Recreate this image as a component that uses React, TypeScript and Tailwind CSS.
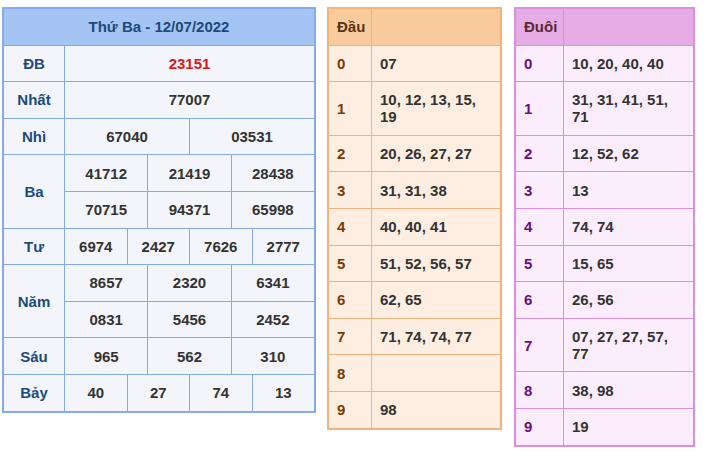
import React from "react";

const cellBase =
  "flex items-center py-[9.3px] leading-[17px] border-r border-b";

function LeftTable() {
  const c = `${cellBase} justify-center border-[#84ace8]`;
  const lab = `${c} text-[#1b4a7d]`;
  const num = `${c} text-[#333333]`;
  return (
    <div className="w-[314px] border-2 border-[#84ace8] overflow-hidden bg-[#f3f5fa]">
      <div className="grid grid-cols-[61px_repeat(12,minmax(0,1fr))] w-[calc(100%+1px)] mb-[-1px]">
        <div className={`${c} col-span-13 bg-[#a4c4f4] text-[#1f4a78]`}>Thứ Ba - 12/07/2022</div>

        <div className={lab}>ĐB</div>
        <div className={`${c} col-span-12 text-[#e0161c]`}>23151</div>

        <div className={lab}>Nhất</div>
        <div className={`${num} col-span-12`}>77007</div>

        <div className={lab}>Nhì</div>
        <div className={`${num} col-span-6`}>67040</div>
        <div className={`${num} col-span-6`}>03531</div>

        <div className={`${lab} row-span-2`}>Ba</div>
        <div className={`${num} col-span-4`}>41712</div>
        <div className={`${num} col-span-4`}>21419</div>
        <div className={`${num} col-span-4`}>28438</div>
        <div className={`${num} col-span-4`}>70715</div>
        <div className={`${num} col-span-4`}>94371</div>
        <div className={`${num} col-span-4`}>65998</div>

        <div className={lab}>Tư</div>
        <div className={`${num} col-span-3`}>6974</div>
        <div className={`${num} col-span-3`}>2427</div>
        <div className={`${num} col-span-3`}>7626</div>
        <div className={`${num} col-span-3`}>2777</div>

        <div className={`${lab} row-span-2`}>Năm</div>
        <div className={`${num} col-span-4`}>8657</div>
        <div className={`${num} col-span-4`}>2320</div>
        <div className={`${num} col-span-4`}>6341</div>
        <div className={`${num} col-span-4`}>0831</div>
        <div className={`${num} col-span-4`}>5456</div>
        <div className={`${num} col-span-4`}>2452</div>

        <div className={lab}>Sáu</div>
        <div className={`${num} col-span-4`}>965</div>
        <div className={`${num} col-span-4`}>562</div>
        <div className={`${num} col-span-4`}>310</div>

        <div className={lab}>Bảy</div>
        <div className={`${num} col-span-3`}>40</div>
        <div className={`${num} col-span-3`}>27</div>
        <div className={`${num} col-span-3`}>74</div>
        <div className={`${num} col-span-3`}>13</div>
      </div>
    </div>
  );
}

const dau: [string, string][] = [
  ["0", "07"],
  ["1", "10, 12, 13, 15, 19"],
  ["2", "20, 26, 27, 27"],
  ["3", "31, 31, 38"],
  ["4", "40, 40, 41"],
  ["5", "51, 52, 56, 57"],
  ["6", "62, 65"],
  ["7", "71, 74, 74, 77"],
  ["8", ""],
  ["9", "98"],
];

const duoi: [string, string][] = [
  ["0", "10, 20, 40, 40"],
  ["1", "31, 31, 41, 51, 71"],
  ["2", "12, 52, 62"],
  ["3", "13"],
  ["4", "74, 74"],
  ["5", "15, 65"],
  ["6", "26, 56"],
  ["7", "07, 27, 27, 57, 77"],
  ["8", "38, 98"],
  ["9", "19"],
];

function SideTable({
  title,
  rows,
  width,
  labelW,
  border,
  head,
  body,
  headText,
  labText,
}: {
  title: string;
  rows: [string, string][];
  width: string;
  labelW: string;
  border: string;
  head: string;
  body: string;
  headText: string;
  labText: string;
}) {
  const c = `${cellBase} px-2 ${border}`;
  return (
    <div className={`${width} border-2 ${border} overflow-hidden ${body}`}>
      <div className={`grid ${labelW} w-[calc(100%+1px)] mb-[-1px]`}>
        <div className={`${c} ${head} ${headText}`}>{title}</div>
        <div className={`${c} ${head}`}>&nbsp;</div>
        {rows.map(([k, v]) => (
          <React.Fragment key={k}>
            <div className={`${c} ${labText}`}>{k}</div>
            <div className={`${c} text-[#333333]`}>{v || "\u00a0"}</div>
          </React.Fragment>
        ))}
      </div>
    </div>
  );
}

export default function App() {
  return (
    <div
      className="min-h-[453px] bg-white flex items-start pt-[7px] pl-[2px] text-[15px] font-bold"
      style={{ fontFamily: '"Liberation Sans", Arial, sans-serif' }}
    >
      <LeftTable />
      <div className="ml-[11px]">
        <SideTable
          title="Đầu"
          rows={dau}
          width="w-[175px]"
          labelW="grid-cols-[43px_minmax(0,1fr)]"
          border="border-[#f2b27c]"
          head="bg-[#f9cb9c]"
          body="bg-[#fdeee1]"
          headText="text-[#5a3214]"
          labText="text-[#7a3b00]"
        />
      </div>
      <div className="ml-[12px]">
        <SideTable
          title="Đuôi"
          rows={duoi}
          width="w-[181px]"
          labelW="grid-cols-[48px_minmax(0,1fr)]"
          border="border-[#dc8fdc]"
          head="bg-[#e6ace6]"
          body="bg-[#fcedfc]"
          headText="text-[#5b2a35]"
          labText="text-[#6a0d80]"
        />
      </div>
    </div>
  );
}
